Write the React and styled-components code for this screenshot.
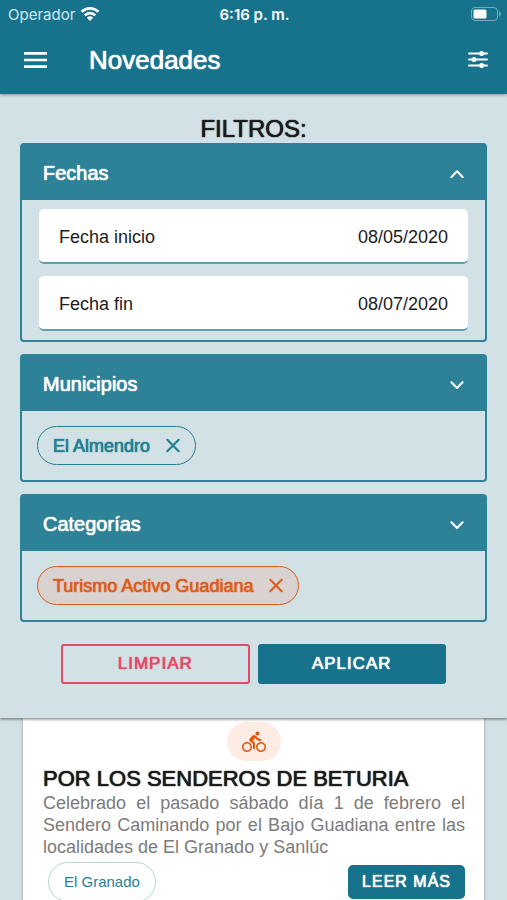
import React, { useState } from "react";
import styled, { createGlobalStyle, css } from "styled-components";
import { MdDirectionsBike } from "react-icons/md";

const GlobalStyle = createGlobalStyle`
  * {
    box-sizing: border-box;
  }
  body {
    margin: 0;
    background: #d2e1e5;
    font-family: "Liberation Sans", Arial, sans-serif;
    color: #1c1c1c;
  }
  button, input {
    font-family: inherit;
  }
`;

// regular weight, slightly thickened to look like a medium one
const medium = css`
  font-weight: 400;
  text-shadow: 0 0 1px currentColor, 0 0 1px currentColor;
`;

const Screen = styled.div`
  display: flex;
  flex-direction: column;
  height: 100vh;
  overflow: hidden;
`;

const Header = styled.header`
  flex: none;
  padding-bottom: 2px;
  background: #17738c;
  color: #fff;
  box-shadow: 0 1px 3px rgba(0, 0, 0, 0.35);
  z-index: 2;
`;

const StatusBar = styled.div`
  display: grid;
  grid-template-columns: 1fr auto 1fr;
  align-items: center;
  height: 28px;
  padding: 0 6px 0 8px;
  font-family: Inter, sans-serif;
  font-size: 15px;
`;

const Carrier = styled.span`
  display: flex;
  align-items: center;
  gap: 5px;
  color: #d3e8ee;
`;

const Clock = styled.span`
  font-weight: 600;
`;

const Battery = styled.span`
  display: flex;
  justify-content: flex-end;
`;

const Toolbar = styled.div`
  display: flex;
  align-items: center;
  height: 64px;
  padding: 0 18px 0 20px;
`;

const IconButton = styled.button`
  display: flex;
  padding: 0;
  border: 0;
  background: none;
  color: #fff;
`;

const Title = styled.h1`
  ${medium}
  flex: 1;
  margin: 0 0 0 38px;
  font-size: 26px;
`;

const Filters = styled.section`
  flex: none;
  padding: 20px 20px 34px;
  background: #d2e1e5;
  box-shadow: 0 1px 3px rgba(0, 0, 0, 0.55);
  z-index: 1;
`;

const FiltersTitle = styled.h2`
  ${medium}
  margin: 0;
  font-size: 24px;
  line-height: 29px;
  text-align: center;
`;

const Panel = styled.div`
  border: 2px solid #2d8297;
  border-radius: 4px;

  & + & {
    margin-top: 12px;
  }
`;

const PanelHeader = styled.button`
  ${medium}
  display: flex;
  align-items: center;
  justify-content: space-between;
  width: 100%;
  height: 55px;
  padding: 2px 21px 0;
  border: 0;
  background: #2d8297;
  color: #fff;
  font-size: 20px;
`;

const DateList = styled.div`
  display: flex;
  flex-direction: column;
  gap: 12px;
  padding: 9px 17px;
`;

const DateRow = styled.label`
  display: flex;
  align-items: center;
  justify-content: space-between;
  height: 55px;
  padding: 4px 20px 0;
  border-bottom: 2px solid #5fa0af;
  border-radius: 5px;
  background: #fff;
  font-size: 18px;
`;

const DateInput = styled.input`
  width: 120px;
  padding: 0;
  border: 0;
  background: none;
  color: inherit;
  font-size: 18px;
  text-align: right;
`;

const ChipList = styled.div`
  display: flex;
  gap: 8px;
  padding: 15px;
`;

const Chip = styled.button`
  ${medium}
  display: flex;
  align-items: center;
  gap: 15px;
  height: 39px;
  padding: 1px 14px 0 15px;
  border: 1px solid currentColor;
  border-radius: 20px;
  background: ${(props) => (props.$accent ? "#d9d2d0" : "transparent")};
  color: ${(props) => (props.$accent ? "#dd5c1e" : "#267f92")};
  font-size: 18px;
`;

const Actions = styled.div`
  display: flex;
  gap: 8px;
  margin-top: 22px;
  padding: 0 41px;
`;

const Button = styled.button`
  ${medium}
  flex: ${(props) => (props.$small ? "none" : 1)};
  height: ${(props) => (props.$small ? 34 : 40)}px;
  padding: 0 12px;
  border: 2px solid ${(props) => (props.$outline ? "#e24a66" : "#17738c")};
  border-radius: ${(props) => (props.$small ? 5 : 3)}px;
  background: ${(props) => (props.$outline ? "transparent" : "#17738c")};
  color: ${(props) => (props.$outline ? "#e24a66" : "#fff")};
  font-size: ${(props) => (props.$small ? 16 : 17)}px;
  letter-spacing: 1px;
`;

const Card = styled.article`
  flex: none;
  margin: 0 23px;
  padding: 4px 19px 24px 20px;
  background: #fff;
  box-shadow: 0 0 3px rgba(0, 0, 0, 0.3);
`;

const Category = styled.div`
  display: flex;
  align-items: center;
  justify-content: center;
  width: 54px;
  height: 39px;
  margin: 0 auto;
  border-radius: 20px;
  background: #fdece4;
  color: #e4570f;
`;

const CardTitle = styled.h3`
  ${medium}
  margin: 5px 0 0;
  font-size: 22px;
  line-height: 26px;
`;

const Summary = styled.p`
  margin: 0;
  color: #7b7b7b;
  font-size: 18px;
  line-height: 22px;
  text-align: justify;
`;

const CardFooter = styled.div`
  display: flex;
  align-items: center;
  justify-content: space-between;
  margin-top: 4px;
  padding-left: 5px;
`;

const Town = styled.span`
  height: 40px;
  padding: 0 15px;
  border: 1px solid #b5d8d5;
  border-radius: 20px;
  color: #267f92;
  font-size: 15px;
  line-height: 38px;
`;

function WifiIcon() {
  return (
    <svg width="20" height="16" viewBox="0 0 20 16" fill="none" stroke="#fff" strokeWidth="2.6">
      <path d="M1.6 5.8a12 12 0 0 1 16.8 0" />
      <path d="M4.8 9.3a7.4 7.4 0 0 1 10.4 0" />
      <path d="M10 15l-3.1-3.2a4.5 4.5 0 0 1 6.2 0z" fill="#fff" stroke="none" />
    </svg>
  );
}

function BatteryIcon() {
  return (
    <svg width="30" height="14" viewBox="0 0 30 14">
      <rect x="0.5" y="0.5" width="26" height="13" rx="3.5" fill="none" stroke="#74abba" />
      <rect x="2.5" y="2.5" width="13" height="9" rx="1.5" fill="#fff" />
      <path d="M28 4.5c2.6 1 2.6 4 0 5z" fill="#74abba" />
    </svg>
  );
}

function MenuIcon() {
  return (
    <svg width="31" height="24" viewBox="0 0 31 24" stroke="#fff" strokeWidth="2.6">
      <path d="M4 5.4h23M4 12h23M4 18.6h23" />
    </svg>
  );
}

function OptionsIcon() {
  return (
    <svg width="22" height="20" viewBox="0 0 22 20" stroke="#fff" strokeWidth="1.8" strokeLinecap="round">
      <path d="M2 3.5h18M2 9.5h18M2 15.5h18" />
      <g fill="#fff" stroke="none">
        <circle cx="14.6" cy="3.5" r="2.5" />
        <circle cx="7" cy="9.5" r="2.5" />
        <circle cx="14.6" cy="15.5" r="2.5" />
      </g>
    </svg>
  );
}

function Chevron({ up }) {
  return (
    <svg width="14" height="10" viewBox="0 0 14 10" fill="none" stroke="#fff" strokeWidth="2" strokeLinecap="round" strokeLinejoin="round">
      <path d={up ? "M1.4 8L7 2.2 12.6 8" : "M1.4 2.2L7 8l5.6-5.8"} />
    </svg>
  );
}

function CloseIcon() {
  return (
    <svg width="16" height="16" viewBox="0 0 16 16" stroke="currentColor" strokeWidth="2.2" strokeLinecap="round">
      <path d="M2.3 1.8l11.4 11.4M13.7 1.8l-11.4 11.4" />
    </svg>
  );
}

function App() {
  const [dates, setDates] = useState([
    { label: "Fecha inicio", value: "08/05/2020" },
    { label: "Fecha fin", value: "08/07/2020" },
  ]);

  const changeDate = (label, value) =>
    setDates(dates.map((d) => (d.label === label ? { ...d, value } : d)));

  return (
    <Screen>
      <GlobalStyle />
      <Header>
        <StatusBar>
          <Carrier>
            Operador <WifiIcon />
          </Carrier>
          <Clock>6:16 p. m.</Clock>
          <Battery>
            <BatteryIcon />
          </Battery>
        </StatusBar>
        <Toolbar>
          <IconButton>
            <MenuIcon />
          </IconButton>
          <Title>Novedades</Title>
          <IconButton>
            <OptionsIcon />
          </IconButton>
        </Toolbar>
      </Header>

      <Filters>
        <FiltersTitle>FILTROS:</FiltersTitle>
        <Panel>
          <PanelHeader>
            Fechas <Chevron up />
          </PanelHeader>
          <DateList>
            {dates.map((date) => (
              <DateRow key={date.label}>
                {date.label}
                <DateInput
                  type="text"
                  value={date.value}
                  onChange={(e) => changeDate(date.label, e.target.value)}
                />
              </DateRow>
            ))}
          </DateList>
        </Panel>
        <Panel>
          <PanelHeader>
            Municipios <Chevron />
          </PanelHeader>
          <ChipList>
            <Chip>
              El Almendro <CloseIcon />
            </Chip>
          </ChipList>
        </Panel>
        <Panel>
          <PanelHeader>
            Categorías <Chevron />
          </PanelHeader>
          <ChipList>
            <Chip $accent>
              Turismo Activo Guadiana <CloseIcon />
            </Chip>
          </ChipList>
        </Panel>
        <Actions>
          <Button $outline>LIMPIAR</Button>
          <Button>APLICAR</Button>
        </Actions>
      </Filters>

      <Card>
        <Category>
          <MdDirectionsBike size={24} />
        </Category>
        <CardTitle>POR LOS SENDEROS DE BETURIA</CardTitle>
        <Summary>
          Celebrado el pasado sábado día 1 de febrero el Sendero Caminando por el
          Bajo Guadiana entre las localidades de El Granado y Sanlúc
        </Summary>
        <CardFooter>
          <Town>El Granado</Town>
          <Button $small>LEER MÁS</Button>
        </CardFooter>
      </Card>
    </Screen>
  );
}

export default App;
